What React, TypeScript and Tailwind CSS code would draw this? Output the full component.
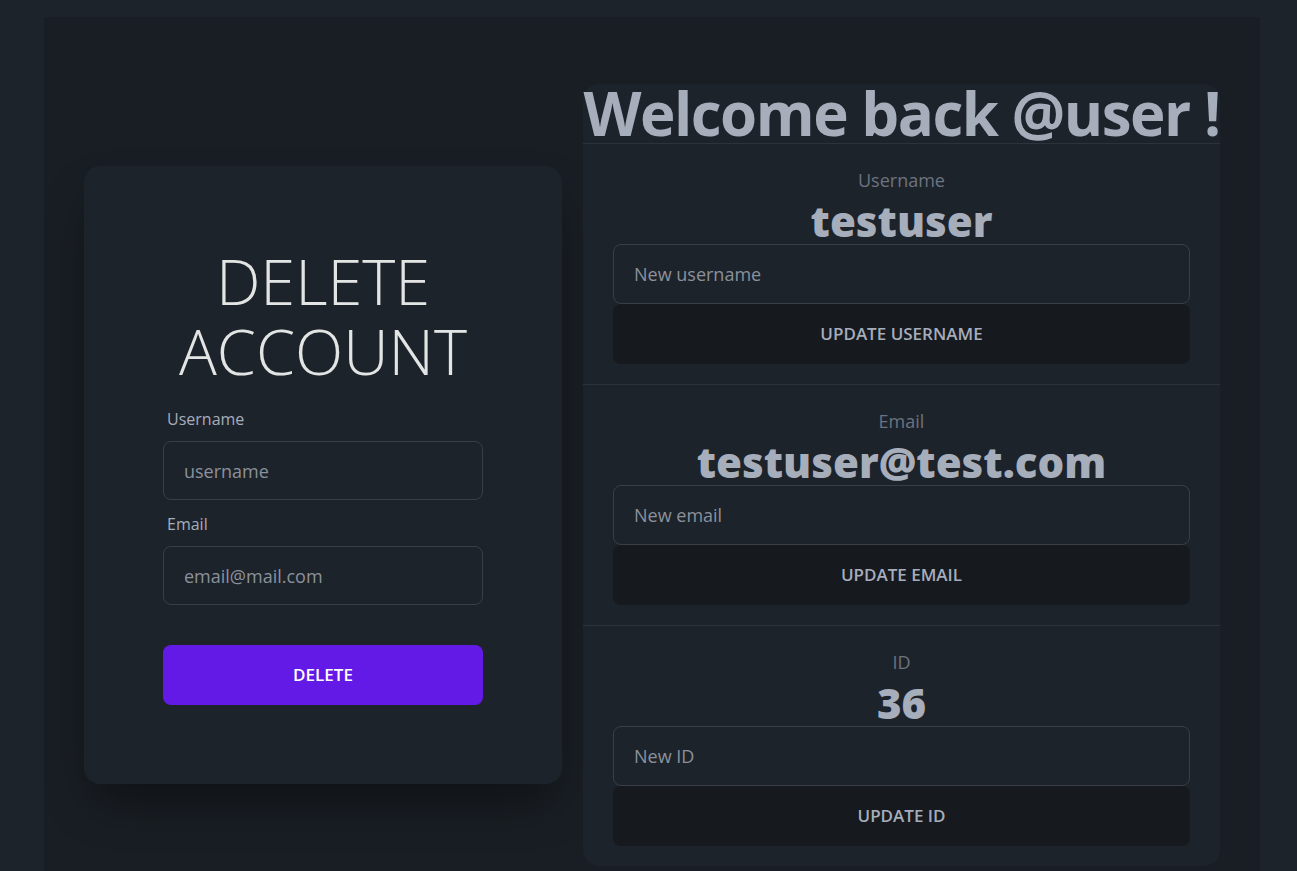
export default function App() {
  const sections = [
    { label: "Username", value: "testuser", placeholder: "New username", action: "Update username" },
    { label: "Email", value: "testuser@test.com", placeholder: "New email", action: "Update email" },
    { label: "ID", value: "36", placeholder: "New ID", action: "Update ID" },
  ];

  return (
    <div className="min-h-screen bg-[#1d232a] pl-[44px] pr-[37px] pt-[17px] font-['Open_Sans',sans-serif]">
      <div className="flex items-center gap-[21px] bg-[#191e24] px-10 py-[67px]">
        {/* Delete account card */}
        <div className="w-[478px] shrink-0 rounded-2xl bg-[#1d232a] px-[79px] pt-20 pb-[79px] shadow-[0_25px_50px_-12px_rgba(0,0,0,0.45)]">
          <h1 className="text-center text-[63px] font-light leading-[70px] text-[#e3e5e4]">
            DELETE ACCOUNT
          </h1>
          <form className="mt-[21px] flex flex-col">
            <label className="px-1 text-base leading-6 text-[#a6adbb]">Username</label>
            <input
              placeholder="username"
              className="mt-[10px] h-[59px] rounded-lg border border-[#383f47] bg-transparent px-5 text-lg text-[#a6adbb] placeholder:text-[#8b919c] outline-none"
            />
            <label className="mt-3 px-1 text-base leading-6 text-[#a6adbb]">Email</label>
            <input
              placeholder="email@mail.com"
              className="mt-[10px] h-[59px] rounded-lg border border-[#383f47] bg-transparent px-5 text-lg text-[#a6adbb] placeholder:text-[#8b919c] outline-none"
            />
            <button
              type="button"
              className="mt-10 h-[60px] rounded-lg bg-[#641ae6] text-[17px] font-semibold uppercase text-white"
            >
              Delete
            </button>
          </form>
        </div>

        {/* Profile card */}
        <div className="w-[637px] shrink-0 rounded-2xl bg-[#1d232a]">
          <h2 className="whitespace-nowrap border-b border-[#2c333b] text-center text-[60px] font-bold leading-[59px] tracking-tight text-[#a6adbb]">
            Welcome back @user !
          </h2>
          {sections.map((s, i) => (
            <div
              key={s.label}
              className={`flex flex-col px-[30px] pt-6 pb-5 ${i < sections.length - 1 ? "border-b border-[#2c333b]" : ""}`}
            >
              <p className="text-center text-lg leading-6 text-[#6c7380]">{s.label}</p>
              <p className="mt-[5px] text-center text-[42px] font-extrabold leading-[47px] text-[#a6adbb]">{s.value}</p>
              <input
                placeholder={s.placeholder}
                className="h-[60px] rounded-lg border border-[#383f47] bg-transparent px-5 text-lg text-[#a6adbb] placeholder:text-[#8b919c] outline-none"
              />
              <button
                type="button"
                className="h-[60px] rounded-lg bg-[#16191e] text-[17px] font-semibold uppercase text-[#a6adbb]"
              >
                {s.action}
              </button>
            </div>
          ))}
        </div>
      </div>
    </div>
  );
}
